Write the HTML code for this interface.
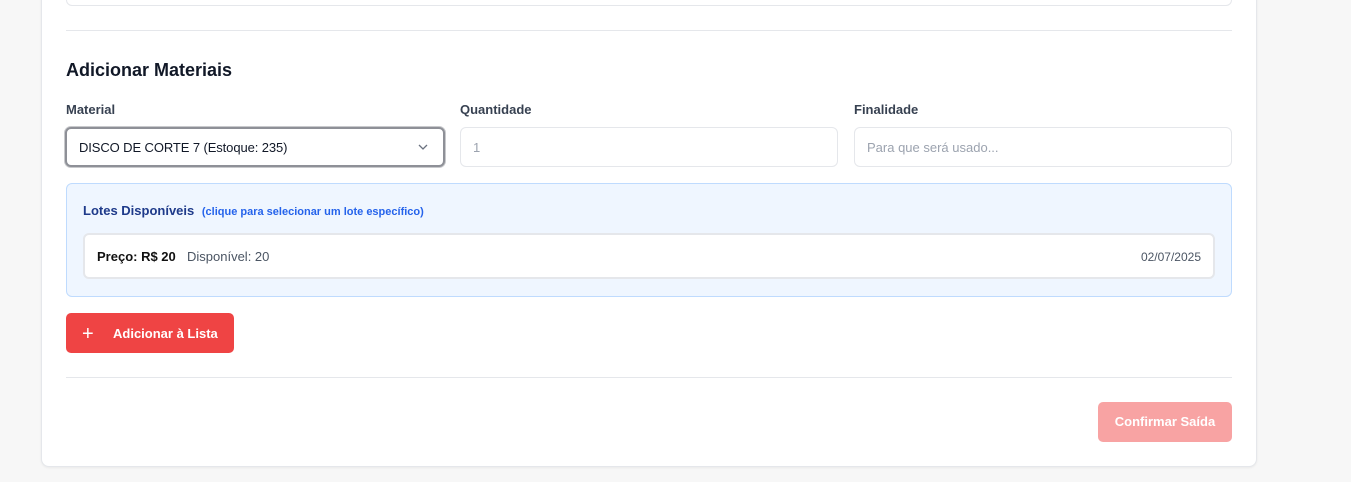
<!DOCTYPE html>
<html><head><style>
*{box-sizing:border-box;margin:0;padding:0}
body{width:1351px;height:482px;background:#f7f7f7;font-family:"Liberation Sans",sans-serif;position:relative;overflow:hidden;color:#111827}
.card{position:absolute;left:41px;top:-10px;width:1216px;height:477px;background:#fff;border:1px solid #e5e7eb;border-radius:8px;box-shadow:0 1px 2px rgba(0,0,0,.06)}
.abs{position:absolute}
.topbox{left:66px;top:-10px;width:1166px;height:16px;border:1px solid #e5e7eb;border-radius:6px;background:#fff}
.hr{left:66px;width:1166px;height:1px;background:#e5e7eb}
h2{position:absolute;left:66px;top:60px;font-size:18px;font-weight:600;color:#111827}
.lbl{position:absolute;top:102px;font-size:13px;font-weight:600;color:#374151}
.inp{position:absolute;top:127px;height:40px;border:1px solid #e5e7eb;border-radius:6px;background:#fff;font-size:13px;color:#9ca3af;padding:12px 12px;line-height:15px}
.sel{border:2px solid #8e9097;color:#111827;box-shadow:0 0 0 1px #c8c9cc;padding:11px 12px}
.blue{left:66px;top:183px;width:1166px;height:114px;background:#eff6ff;border:1px solid #bfdbfe;border-radius:6px}
.lot{left:83px;top:233px;width:1132px;height:46px;background:#fff;border:2px solid #e5e7eb;border-radius:6px;font-size:13px}
.btn{left:66px;top:313px;width:168px;height:40px;background:#ef4444;border-radius:5px;color:#fff;font-size:13px;font-weight:700}
.conf{left:1098px;top:402px;width:134px;height:40px;background:#f8a3a3;border-radius:5px;color:#fff;font-size:13px;font-weight:700;text-align:center;line-height:40px}
</style></head><body>
<div class="card"></div>
<div class="abs topbox"></div>
<div class="abs hr" style="top:30px"></div>
<h2>Adicionar Materiais</h2>
<div class="lbl" style="left:66px">Material</div>
<div class="lbl" style="left:460px">Quantidade</div>
<div class="lbl" style="left:854px">Finalidade</div>
<div class="inp sel" style="left:65px;width:380px;letter-spacing:-0.1px">DISCO DE CORTE 7 (Estoque: 235)
<svg class="abs" style="left:350px;top:14px" width="12" height="8" viewBox="0 0 12 8"><path d="M2 2l4 4 4-4" fill="none" stroke="#6b7280" stroke-width="1.3"/></svg></div>
<div class="inp" style="left:460px;width:378px">1</div>
<div class="inp" style="left:854px;width:378px">Para que será usado...</div>
<div class="abs blue"></div>
<div class="abs" style="left:83px;top:203px;font-size:13px;font-weight:600;color:#1e3a8a">Lotes Disponíveis <span style="font-size:11px;color:#2563eb;margin-left:4px">(clique para selecionar um lote específico)</span></div>
<div class="abs lot">
<span class="abs" style="left:12px;top:14px;font-weight:700;color:#111">Preço: R$ 20</span>
<span class="abs" style="left:102px;top:14px;color:#4b5563">Disponível: 20</span>
<span class="abs" style="right:12px;top:15px;font-size:12px;color:#4b5563">02/07/2025</span></div>
<div class="abs btn"><span class="abs" style="left:16px;top:11px;font-size:20px;font-weight:400;line-height:20px">+</span><span class="abs" style="left:47px;top:13px">Adicionar à Lista</span></div>
<div class="abs hr" style="top:377px"></div>
<div class="abs conf">Confirmar Saída</div>
</body></html>
